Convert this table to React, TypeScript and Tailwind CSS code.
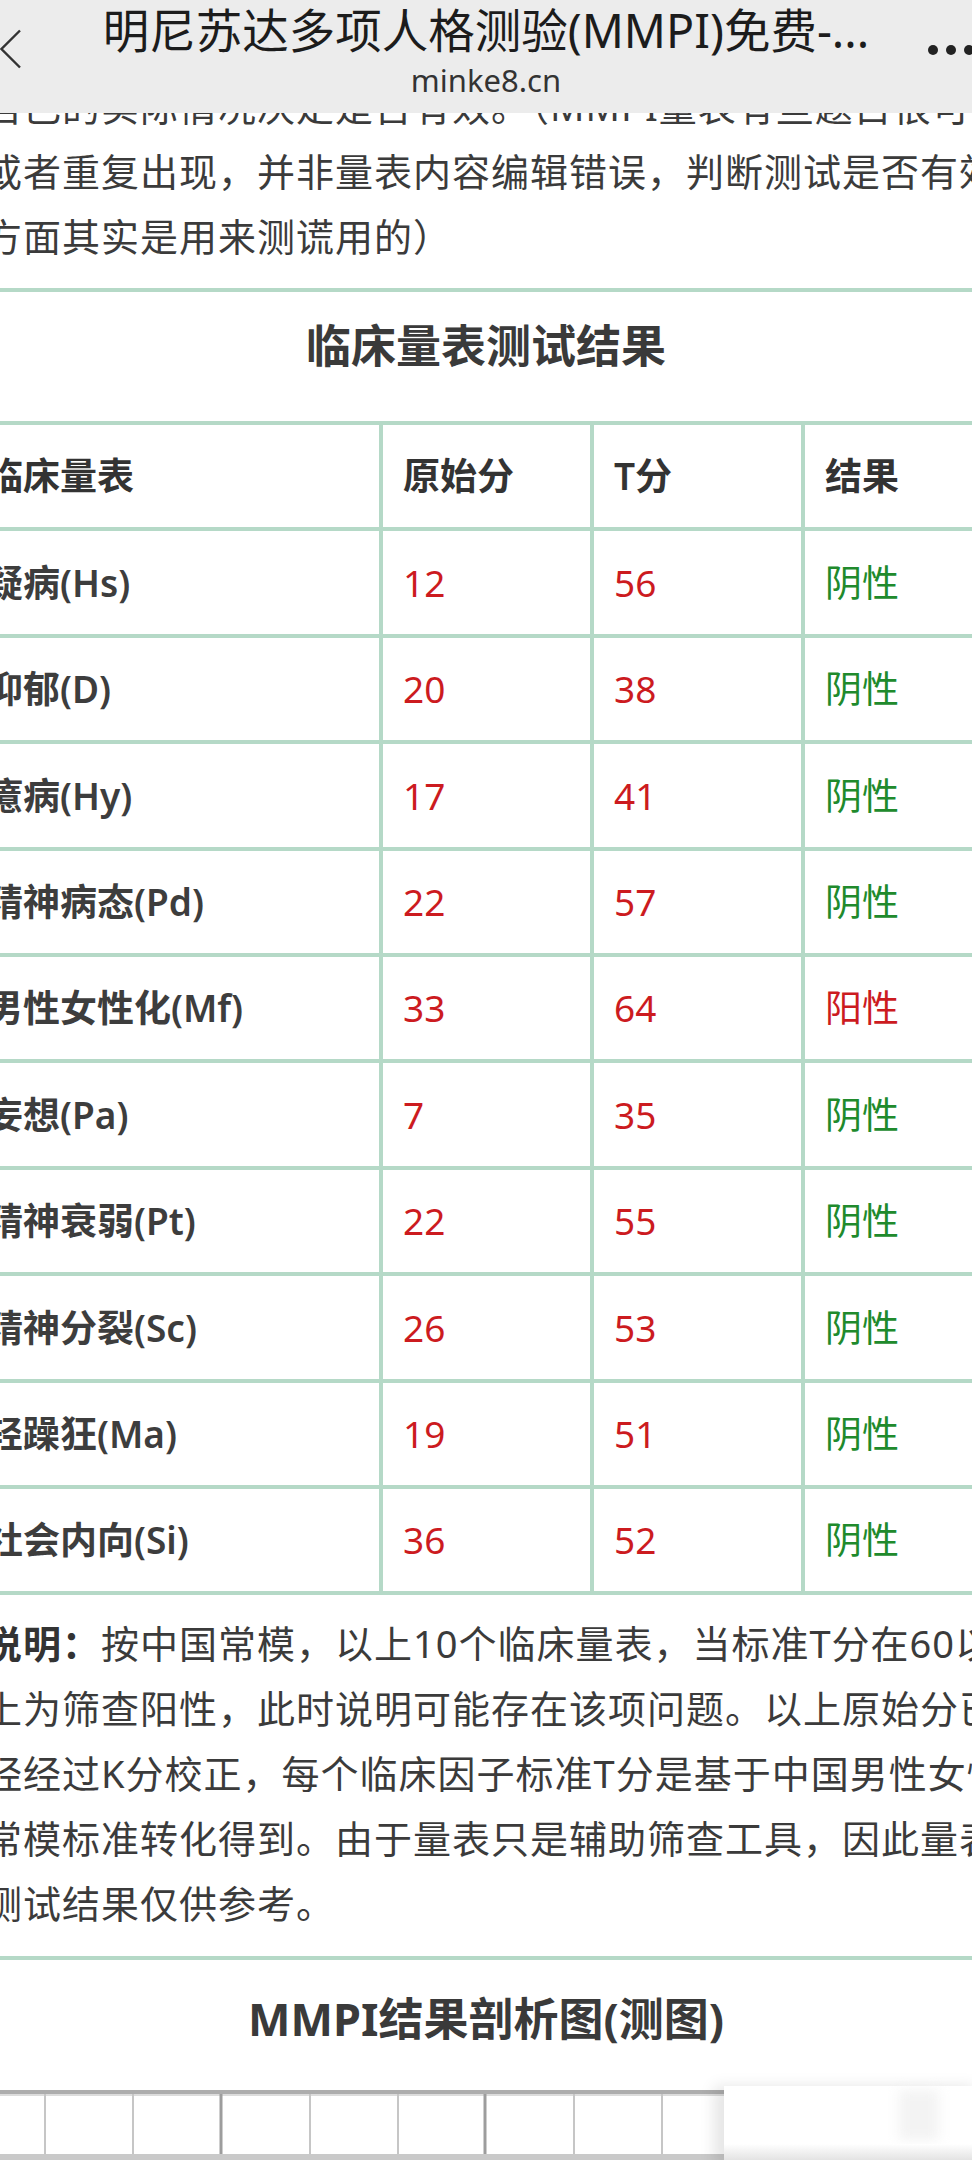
import React from "react";

type Row = { name: string; raw: number; t: number; positive?: boolean };

const ROWS: Row[] = [
  { name: "疑病(Hs)", raw: 12, t: 56 },
  { name: "抑郁(D)", raw: 20, t: 38 },
  { name: "癔病(Hy)", raw: 17, t: 41 },
  { name: "精神病态(Pd)", raw: 22, t: 57 },
  { name: "男性女性化(Mf)", raw: 33, t: 64, positive: true },
  { name: "妄想(Pa)", raw: 7, t: 35 },
  { name: "精神衰弱(Pt)", raw: 22, t: 55 },
  { name: "精神分裂(Sc)", raw: 26, t: 53 },
  { name: "轻躁狂(Ma)", raw: 19, t: 51 },
  { name: "社会内向(Si)", raw: 36, t: 52 },
];

const INTRO_LINES = [
  "自己的实际情况决定是否有效。（MMPI量表有些题目很可能会相似",
  "或者重复出现，并非量表内容编辑错误，判断测试是否有效",
  "方面其实是用来测谎用的）",
];

const NOTE_LINES = [
  "上为筛查阳性，此时说明可能存在该项问题。以上原始分已",
  "经经过K分校正，每个临床因子标准T分是基于中国男性女性",
  "常模标准转化得到。由于量表只是辅助筛查工具，因此量表",
  "测试结果仅供参考。",
];

// chart grid columns (x in px), every third one is darker
const GRID_X = [45, 133, 221, 310, 398, 485, 574, 662, 750, 839, 927];
const DARK_X = [221, 485, 750];

const Cell: React.FC<{ first?: boolean; className?: string; children: React.ReactNode }> = ({
  first,
  className = "",
  children,
}) => (
  <div
    className={`flex items-center ${
      first ? "pl-[24px]" : "border-l-4 border-[#b5d9c7] pl-[20px]"
    } ${className}`}
  >
    {children}
  </div>
);

const TopBar: React.FC = () => (
  <header className="absolute inset-x-0 top-0 z-10 h-[113px] bg-[#ececec]">
    <svg
      className="absolute left-0 top-[29px]"
      width="22"
      height="40"
      viewBox="0 0 22 40"
    >
      <polyline
        points="20,1.5 1.5,20 20,38.5"
        fill="none"
        stroke="#333"
        strokeWidth="2.4"
      />
    </svg>
    <div className="flex flex-col items-center">
      <div className="mt-[4px] whitespace-nowrap text-[46.5px] leading-[52px] text-[#1c1c1c]">
        明尼苏达多项人格测验(MMPI)免费-...
      </div>
      <div className="mt-[4px] text-[31px] leading-[40px] text-[#333]">
        minke8.cn
      </div>
    </div>
    <div className="absolute left-[928px] top-[45px] flex gap-[8px]">
      <span className="size-[10px] rounded-full bg-[#222]" />
      <span className="size-[10px] rounded-full bg-[#222]" />
      <span className="size-[10px] rounded-full bg-[#222]" />
    </div>
  </header>
);

const ProfileChart: React.FC = () => (
  <svg width="1048" height="70" viewBox="0 0 1048 70" className="block">
    <g transform="translate(38 0)">
      <rect x="-38" y="0" width="1048" height="4" fill="#adadad" />
      <rect x="-38" y="4" width="1048" height="2" fill="#dcdcdc" />
      {GRID_X.map((x) =>
        DARK_X.includes(x) ? (
          <rect key={x} x={x - 1.5} y="4" width="3" height="62" fill="#9d9d9d" />
        ) : (
          <rect key={x} x={x - 1} y="4" width="2" height="62" fill="#c6c6c6" />
        ),
      )}
      <rect x="-38" y="64" width="1048" height="6" fill="#c9c9c9" />
    </g>
  </svg>
);

export default function App() {
  return (
    <div className="relative h-[2160px] w-[972px] overflow-hidden bg-white font-['Noto_Sans','Noto_Sans_CJK_SC',sans-serif] text-[#3b3b3b]">
      <TopBar />

      <div className="-ml-[38px] w-[1048px]">
        {/* intro text, first line sits under the top bar */}
        <p className="whitespace-nowrap px-[22px] pb-[19px] pt-[74px] text-[38px] leading-[65px] tracking-[1px]">
          {INTRO_LINES.map((line, i) => (
            <React.Fragment key={i}>
              {i > 0 && <br />}
              {line}
            </React.Fragment>
          ))}
        </p>

        {/* caption */}
        <div className="h-[133px] border-t-4 border-[#b5d9c7] pt-[21px] text-center text-[45px] font-bold leading-[65px] text-[#3a3a3a]">
          临床量表测试结果
        </div>

        {/* table */}
        <div className="text-[37px]">
          <div className="grid h-[106.4px] grid-cols-[417px_211px_211px_209px] border-t-4 border-[#b5d9c7] font-semibold text-[#333]">
            <Cell first>临床量表</Cell>
            <Cell>原始分</Cell>
            <Cell>T分</Cell>
            <Cell>结果</Cell>
          </div>
          {ROWS.map((row) => (
            <div
              key={row.name}
              className="grid h-[106.4px] grid-cols-[417px_211px_211px_209px] border-t-4 border-[#b5d9c7]"
            >
              <Cell first className="font-semibold text-[#3d3d3d]">
                {row.name}
              </Cell>
              <Cell className="text-[#cc1b1f]">{row.raw}</Cell>
              <Cell className="text-[#cc1b1f]">{row.t}</Cell>
              <Cell className={row.positive ? "text-[#cc1b1f]" : "text-[#208a2c]"}>
                {row.positive ? "阳性" : "阴性"}
              </Cell>
            </div>
          ))}
        </div>

        {/* note */}
        <p className="whitespace-nowrap border-t-4 border-[#b5d9c7] px-[22px] pb-[20px] pt-[16px] text-[38px] leading-[65px] tracking-[1px]">
          <b className="font-bold text-[#333]">说明：</b>按中国常模，以上10个临床量表，当标准T分在60以
          {NOTE_LINES.map((line, i) => (
            <React.Fragment key={i}>
              <br />
              {line}
            </React.Fragment>
          ))}
        </p>

        {/* profile chart */}
        <div className="border-t-4 border-[#b5d9c7] pt-[26px]">
          <h2 className="text-center text-[45px] font-bold leading-[65px] text-[#3a3a3a]">
            MMPI结果剖析图(测图)
          </h2>
          <div className="mt-[39px]">
            <ProfileChart />
          </div>
        </div>
      </div>

      {/* blurred floating layer over the right part of the chart */}
      <div className="absolute left-[724px] top-[2086px] h-[80px] w-[260px] bg-white shadow-[-10px_0_14px_rgba(0,0,0,0.10)]">
        <div className="ml-[175px] mt-[4px] h-[50px] w-[40px] bg-[#f3f3f3] blur-[6px]" />
        <div className="absolute inset-x-0 bottom-0 h-[22px] bg-gradient-to-b from-white to-[#d9d9d9]" />
      </div>
    </div>
  );
}
